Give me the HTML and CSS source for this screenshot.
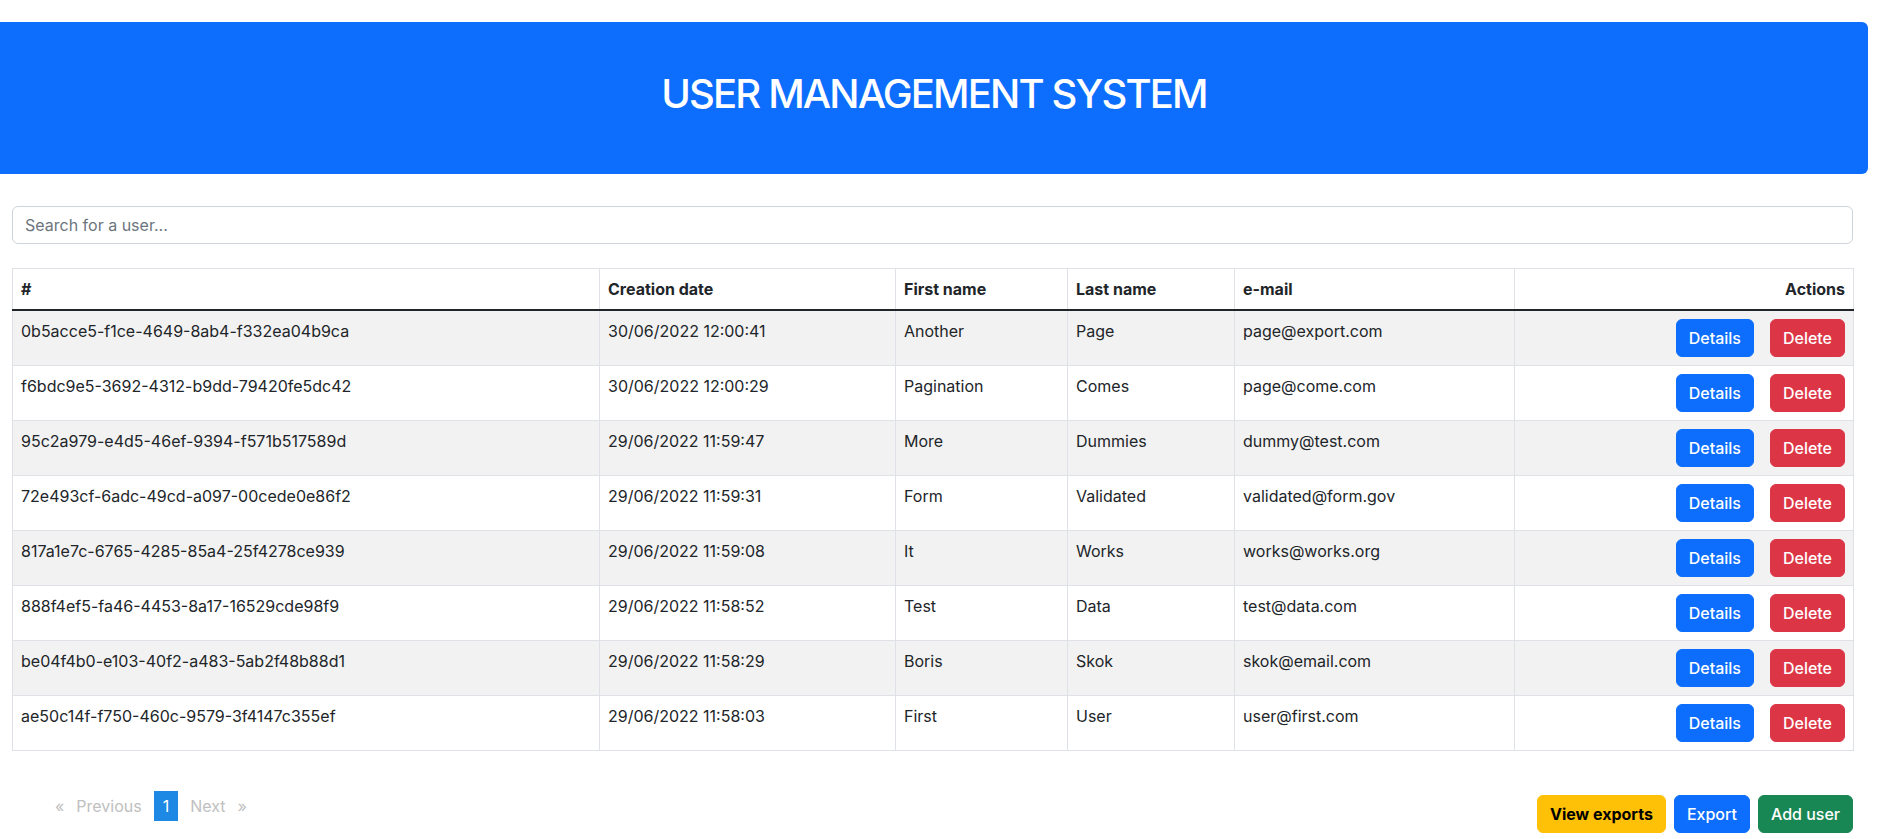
FILE: index.html
```html
<!DOCTYPE html>
<html lang="en">
<head>
<meta charset="utf-8">
<title>User Management System</title>
<link rel="stylesheet" href="styles.css">
</head>
<body>
<div class="page">
  <header class="banner">
    <h1 class="banner-title">USER MANAGEMENT SYSTEM</h1>
  </header>

  <input class="search" type="text" placeholder="Search for a user...">

  <table class="users">
    <colgroup>
      <col class="c-id"><col class="c-date"><col class="c-first"><col class="c-last"><col class="c-mail"><col class="c-act">
    </colgroup>
    <thead>
      <tr>
        <th>#</th>
        <th>Creation date</th>
        <th>First name</th>
        <th>Last name</th>
        <th>e-mail</th>
        <th class="right">Actions</th>
      </tr>
    </thead>
    <tbody>
      <tr>
        <td>0b5acce5-f1ce-4649-8ab4-f332ea04b9ca</td><td>30/06/2022 12:00:41</td><td>Another</td><td>Page</td><td>page@export.com</td>
        <td class="right"><button class="btn btn-primary">Details</button><button class="btn btn-danger">Delete</button></td>
      </tr>
      <tr>
        <td>f6bdc9e5-3692-4312-b9dd-79420fe5dc42</td><td>30/06/2022 12:00:29</td><td>Pagination</td><td>Comes</td><td>page@come.com</td>
        <td class="right"><button class="btn btn-primary">Details</button><button class="btn btn-danger">Delete</button></td>
      </tr>
      <tr>
        <td>95c2a979-e4d5-46ef-9394-f571b517589d</td><td>29/06/2022 11:59:47</td><td>More</td><td>Dummies</td><td>dummy@test.com</td>
        <td class="right"><button class="btn btn-primary">Details</button><button class="btn btn-danger">Delete</button></td>
      </tr>
      <tr>
        <td>72e493cf-6adc-49cd-a097-00cede0e86f2</td><td>29/06/2022 11:59:31</td><td>Form</td><td>Validated</td><td>validated@form.gov</td>
        <td class="right"><button class="btn btn-primary">Details</button><button class="btn btn-danger">Delete</button></td>
      </tr>
      <tr>
        <td>817a1e7c-6765-4285-85a4-25f4278ce939</td><td>29/06/2022 11:59:08</td><td>It</td><td>Works</td><td>works@works.org</td>
        <td class="right"><button class="btn btn-primary">Details</button><button class="btn btn-danger">Delete</button></td>
      </tr>
      <tr>
        <td>888f4ef5-fa46-4453-8a17-16529cde98f9</td><td>29/06/2022 11:58:52</td><td>Test</td><td>Data</td><td>test@data.com</td>
        <td class="right"><button class="btn btn-primary">Details</button><button class="btn btn-danger">Delete</button></td>
      </tr>
      <tr>
        <td>be04f4b0-e103-40f2-a483-5ab2f48b88d1</td><td>29/06/2022 11:58:29</td><td>Boris</td><td>Skok</td><td>skok@email.com</td>
        <td class="right"><button class="btn btn-primary">Details</button><button class="btn btn-danger">Delete</button></td>
      </tr>
      <tr>
        <td>ae50c14f-f750-460c-9579-3f4147c355ef</td><td>29/06/2022 11:58:03</td><td>First</td><td>User</td><td>user@first.com</td>
        <td class="right"><button class="btn btn-primary">Details</button><button class="btn btn-danger">Delete</button></td>
      </tr>
    </tbody>
  </table>

  <div class="footer">
    <ul class="pager">
      <li class="pager-item">«</li>
      <li class="pager-item">Previous</li>
      <li class="pager-item pager-active">1</li>
      <li class="pager-item">Next</li>
      <li class="pager-item">»</li>
    </ul>
    <div class="footer-actions">
      <button class="btn btn-warning">View exports</button>
      <button class="btn btn-primary">Export</button>
      <button class="btn btn-success">Add user</button>
    </div>
  </div>
</div>
</body>
</html>
```
FILE: styles.css
```css
* { box-sizing: border-box; }

html, body {
  margin: 0;
  background: #fff;
}

body {
  font-family: Inter, "Liberation Sans", sans-serif;
  font-size: 16px;
  line-height: 24px;
  color: #212529;
  overflow: hidden;
}

.page {
  padding: 22px 24px 0 12px;
}

.banner {
  margin: 0 -15px 0 -12px;
  height: 152px;
  padding-top: 48px;
  background: #0d6efd;
  border-radius: 0 6px 6px 0;
}

.banner-title {
  margin: 0;
  text-align: center;
  color: #fff;
  font-size: 40px;
  line-height: 48px;
  font-weight: 500;
  letter-spacing: -1.85px;
}

.search {
  display: block;
  width: 100%;
  height: 38px;
  margin-top: 32px;
  padding: 6px 12px;
  font-family: inherit;
  font-size: 16px;
  line-height: 24px;
  color: #212529;
  border: 1px solid #ced4da;
  border-radius: 6px;
  outline: none;
}

.search::placeholder {
  color: #6c757d;
}

.users {
  width: 100%;
  margin-top: 24px;
  border-collapse: collapse;
  table-layout: fixed;
}

.c-id { width: 587px; }
.c-date { width: 296px; }
.c-first { width: 172px; }
.c-last { width: 167px; }
.c-mail { width: 280px; }
.c-act { width: 339px; }

.users th,
.users td {
  padding: 8px;
  border: 1px solid #dee2e6;
  text-align: left;
  vertical-align: top;
  white-space: nowrap;
}

.users th {
  font-weight: 700;
  border-bottom: 2px solid #212529;
}

.users tbody tr:nth-child(odd) td {
  background: #f2f2f2;
}

.users .right {
  text-align: right;
}

.btn {
  display: inline-block;
  height: 38px;
  padding: 6px 12px;
  font-family: inherit;
  font-size: 16px;
  line-height: 24px;
  font-weight: 500;
  color: #fff;
  border: 1px solid transparent;
  border-radius: 6px;
  cursor: pointer;
  vertical-align: top;
}

.users td .btn + .btn {
  margin-left: 16px;
}

.btn-primary { background: #0d6efd; border-color: #0d6efd; }
.btn-danger { background: #dc3545; border-color: #dc3545; }
.btn-success { background: #198754; border-color: #198754; }
.btn-warning { background: #ffc107; border-color: #ffc107; color: #000; font-weight: 700; }

.footer {
  display: flex;
  justify-content: space-between;
  align-items: flex-start;
}

.pager {
  display: flex;
  align-items: center;
  gap: 12px;
  list-style: none;
  margin: 40px 0 0;
  padding: 0 0 0 43px;
}

.pager-item {
  color: #c0c0c0;
  line-height: 30px;
}

.pager-active {
  background: #1e88e5;
  color: #fff;
  padding: 0 9px;
}

.footer-actions {
  display: flex;
  gap: 8px;
  margin-top: 44px;
}
```
